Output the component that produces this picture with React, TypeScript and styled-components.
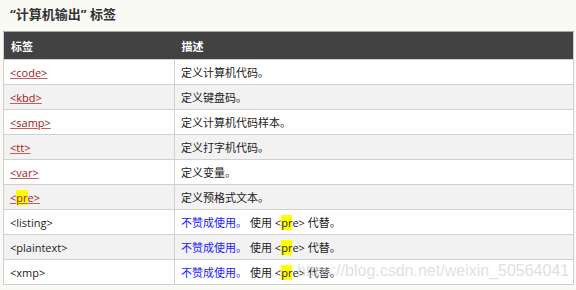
import React from 'react';
import styled, { createGlobalStyle } from 'styled-components';

const GlobalStyle = createGlobalStyle`
  html, body {
    margin: 0;
    padding: 0;
    background: #fafaf5;
  }
  body {
    font-family: "Open Sans", "Noto Sans CJK SC", sans-serif;
    font-size: 11px;
    color: #333;
  }
`;

interface Row {
  tag: string;
  linked: boolean;
  desc: string;
  deprecated?: boolean;
}

const rows: Row[] = [
  { tag: '<code>', linked: true, desc: '定义计算机代码。' },
  { tag: '<kbd>', linked: true, desc: '定义键盘码。' },
  { tag: '<samp>', linked: true, desc: '定义计算机代码样本。' },
  { tag: '<tt>', linked: true, desc: '定义打字机代码。' },
  { tag: '<var>', linked: true, desc: '定义变量。' },
  { tag: '<pre>', linked: true, desc: '定义预格式文本。' },
  { tag: '<listing>', linked: false, desc: '', deprecated: true },
  { tag: '<plaintext>', linked: false, desc: '', deprecated: true },
  { tag: '<xmp>', linked: false, desc: '', deprecated: true },
];

// highlight the "pr" of pre, like the browser search in the screenshot
const renderTag = (tag: string) => {
  if (tag !== '<pre>') return tag;
  return (
    <>
      &lt;<Mark>pr</Mark>e&gt;
    </>
  );
};

const App: React.FC = () => {
  return (
    <Page>
      <GlobalStyle />
      <Title>“计算机输出” 标签</Title>
      <Table>
        <colgroup>
          <col style={{ width: 171 }} />
          <col />
        </colgroup>
        <thead>
          <tr>
            <HeadCell>标签</HeadCell>
            <HeadCell>描述</HeadCell>
          </tr>
        </thead>
        <tbody>
          {rows.map((row, i) => (
            <BodyRow key={row.tag} $alt={i % 2 === 1}>
              <Cell>{row.linked ? <TagLink>{renderTag(row.tag)}</TagLink> : row.tag}</Cell>
              <Cell>
                {row.deprecated ? (
                  <>
                    <Deprecated>不赞成使用。</Deprecated>使用 &lt;<Mark>pr</Mark>e&gt; 代替。
                  </>
                ) : (
                  row.desc
                )}
              </Cell>
            </BodyRow>
          ))}
        </tbody>
      </Table>
      <Watermark>https://blog.csdn.net/weixin_50564041</Watermark>
    </Page>
  );
};

export default App;

const Page = styled.div`
  position: relative;
  width: 576px;
  height: 290px;
  padding: 0 2px 0 3px;
  box-sizing: border-box;
  overflow: hidden;
`;

const Title = styled.h2`
  margin: 0;
  height: 31px;
  padding-left: 7px;
  line-height: 28px;
  font-size: 13px;
  font-weight: bold;
  color: #333;
`;

const Table = styled.table`
  width: 571px;
  border-collapse: collapse;
  border: 1px solid #d0d0d0;
  table-layout: fixed;
`;

const HeadCell = styled.th`
  height: 27px;
  padding: 0 7px;
  background: #424242;
  color: #fff;
  text-align: left;
  font-weight: bold;
  font-size: 11px;
  border-top: 1px solid #a8a8a0;
`;

const BodyRow = styled.tr<{ $alt: boolean }>`
  background: ${(p) => (p.$alt ? '#f2f2f2' : '#ffffff')};
`;

const Cell = styled.td`
  height: 24px;
  padding: 0 6px 0 6px;
  border: 1px solid #d0d0d0;
  vertical-align: middle;
  white-space: nowrap;
  color: #222;
`;

const TagLink = styled.a`
  color: #a02020;
  text-decoration: underline;
  text-decoration-color: #c06060;
`;

const Mark = styled.span`
  background: #ffff00;
`;

const Deprecated = styled.span`
  color: #1a1aff;
  margin-right: 3px;
`;

const Watermark = styled.div`
  position: absolute;
  left: 297px;
  top: 262px;
  font-family: "Liberation Sans", Arial, sans-serif;
  font-size: 16px;
  color: rgba(210, 210, 210, 0.7);
  white-space: nowrap;
  pointer-events: none;
`;
